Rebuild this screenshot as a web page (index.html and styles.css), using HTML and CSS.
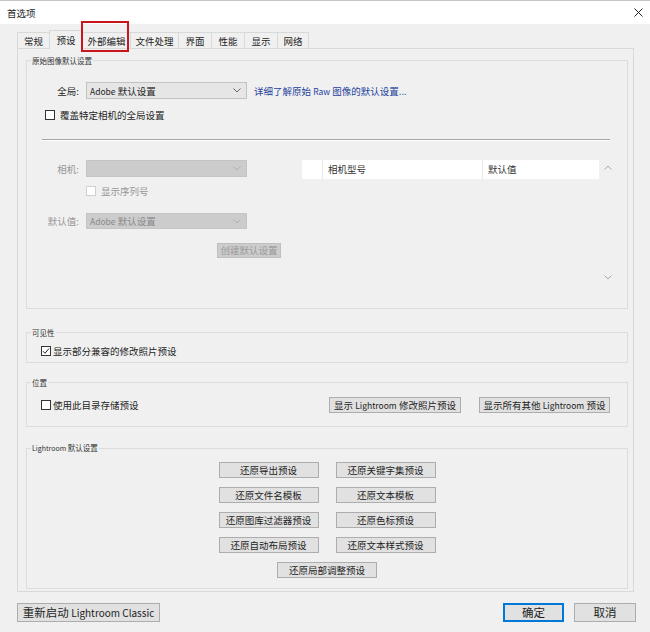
FILE: index.html
```html
<!DOCTYPE html>
<html lang="zh-CN">
<head>
    <meta charset="UTF-8">
    <title>首选项</title>
    <link rel="stylesheet" href="styles.css">
</head>
<body>
    <div class="titlebar">
        <span class="title">首选项</span>
        <svg class="close" width="9" height="9" viewBox="0 0 9 9"><path d="M0.5 0.5L8.5 8.5M8.5 0.5L0.5 8.5" stroke="#222" stroke-width="1"/></svg>
    </div>

    <div class="main">
        <div class="tabs">
            <div class="tab tab-2 first">常规</div>
            <div class="tab tab-2 active">预设</div>
            <div class="tab tab-4 marked">外部编辑</div>
            <div class="tab tab-4">文件处理</div>
            <div class="tab tab-2">界面</div>
            <div class="tab tab-2">性能</div>
            <div class="tab tab-2">显示</div>
            <div class="tab tab-2 last">网络</div>
        </div>

        <div class="page">
            <!-- 原始图像默认设置 -->
            <fieldset class="group group-raw">
                <legend>原始图像默认设置</legend>
                <div class="row row-global">
                    <span class="label">全局:</span>
                    <div class="select">
                        <span><span class="en">Adobe</span> 默认设置</span>
                        <svg class="chev" width="8" height="5" viewBox="0 0 8 5"><path d="M0.5 0.5L4 4L7.5 0.5" fill="none" stroke="#666" stroke-width="1"/></svg>
                    </div>
                    <span class="link">详细了解原始 <span class="en">Raw</span> 图像的默认设置...</span>
                </div>
                <div class="check row-override"><span class="box"></span>覆盖特定相机的全局设置</div>
                <div class="separator"></div>

                <div class="camera-area">
                    <div class="camera-form">
                        <div class="row row-camera">
                            <span class="label disabled-text">相机:</span>
                            <div class="select disabled">
                                <span></span>
                                <svg class="chev" width="8" height="5" viewBox="0 0 8 5"><path d="M0.5 0.5L4 4L7.5 0.5" fill="none" stroke="#b0b0b0" stroke-width="1"/></svg>
                            </div>
                        </div>
                        <div class="check disabled-text row-serial"><span class="box box-disabled"></span>显示序列号</div>
                        <div class="row row-default">
                            <span class="label disabled-text">默认值:</span>
                            <div class="select disabled">
                                <span><span class="en">Adobe</span> 默认设置</span>
                                <svg class="chev" width="8" height="5" viewBox="0 0 8 5"><path d="M0.5 0.5L4 4L7.5 0.5" fill="none" stroke="#b0b0b0" stroke-width="1"/></svg>
                            </div>
                        </div>
                        <div class="button button-disabled create">创建默认设置</div>
                    </div>

                    <div class="table">
                        <div class="table-main">
                            <div class="thead">
                                <div class="th th-first"></div>
                                <div class="th th-model">相机型号</div>
                                <div class="th th-value">默认值</div>
                            </div>
                        </div>
                        <div class="scrollbar">
                            <svg width="8" height="5" viewBox="0 0 8 5"><path d="M0.5 4.5L4 1L7.5 4.5" fill="none" stroke="#a8a8a8" stroke-width="1"/></svg>
                            <svg width="8" height="5" viewBox="0 0 8 5"><path d="M0.5 0.5L4 4L7.5 0.5" fill="none" stroke="#a8a8a8" stroke-width="1"/></svg>
                        </div>
                    </div>
                </div>
            </fieldset>

            <!-- 可见性 -->
            <fieldset class="group group-visibility">
                <legend>可见性</legend>
                <div class="check row-partial">
                    <span class="box">
                        <svg width="8" height="8" viewBox="0 0 8 8"><path d="M1 4.2L3 6.3L7 1.5" fill="none" stroke="#222" stroke-width="1"/></svg>
                    </span>显示部分兼容的修改照片预设
                </div>
            </fieldset>

            <!-- 位置 -->
            <fieldset class="group group-location">
                <legend>位置</legend>
                <div class="row row-location">
                    <div class="check"><span class="box"></span>使用此目录存储预设</div>
                    <div class="button show-develop">显示 <span class="en">Lightroom</span> 修改照片预设</div>
                    <div class="button show-other">显示所有其他 <span class="en">Lightroom</span> 预设</div>
                </div>
            </fieldset>

            <!-- Lightroom 默认设置 -->
            <fieldset class="group group-defaults">
                <legend><span class="en">Lightroom</span> 默认设置</legend>
                <div class="restore-grid">
                    <div class="button">还原导出预设</div>
                    <div class="button">还原关键字集预设</div>
                    <div class="button">还原文件名模板</div>
                    <div class="button">还原文本模板</div>
                    <div class="button">还原图库过滤器预设</div>
                    <div class="button">还原色标预设</div>
                    <div class="button">还原自动布局预设</div>
                    <div class="button">还原文本样式预设</div>
                    <div class="button wide-center">还原局部调整预设</div>
                </div>
            </fieldset>
        </div>

        <div class="footer">
            <div class="button footer-button restart">重新启动 <span class="en">Lightroom Classic</span></div>
            <div class="button footer-button ok">确定</div>
            <div class="button footer-button cancel">取消</div>
        </div>
    </div>
</body>
</html>
```

FILE: styles.css
```css
body {
    margin: 0;
    width: 650px;
    height: 632px;
    overflow: hidden;
    background-color: #f0f0f0;
    font-family: "Noto Sans CJK SC", "Noto Sans", sans-serif;
    font-size: 9.5px;
    color: #1e1e1e;
}

/* Latin text is drawn a little smaller than the CJK glyphs */
.en {
    font-size: 8.5px;
}

/* barra del titolo */
.titlebar {
    box-sizing: border-box;
    height: 24px;
    background-color: #fff;
    border-top: 1px solid #c6c6c6;
    display: flex;
    align-items: center;
    justify-content: space-between;
    padding: 0 7px 0 7px;
}
.title {
    line-height: 12px;
}

.main {
    padding: 8px 0 0 17px;
}

/* schede */
.tabs {
    display: flex;
    height: 16px;
    position: relative;
    z-index: 1;
}
.tab {
    position: relative;
    box-sizing: border-box;
    height: 16px;
    border: 1px solid #d9d9d9;
    border-bottom: none;
    margin-right: -1px;
    text-align: center;
    line-height: 16px;
    background-color: #f0f0f0;
}
.tab-2 {
    width: 34px;
}
.tab-4 {
    width: 49px;
}
.tab.first {
    width: 33px;
}
.tab.last {
    width: 32px;
}
.tab.active {
    height: 19px;
    margin-top: -2px;
    line-height: 19px;
    background-color: #f0f0f0;
}
.tab.marked::after {
    content: "";
    position: absolute;
    left: -2px;
    right: 1px;
    top: -12px;
    bottom: -4px;
    border: 2px solid #c8161e;
}

/* pagina */
.page {
    box-sizing: border-box;
    width: 617px;
    height: 544px;
    border: 1px solid #d9d9d9;
    padding: 7px 0 0 8px;
    background-color: #f0f0f0;
}

.group {
    box-sizing: border-box;
    width: 602px;
    margin: 0;
    padding: 0;
    min-width: 0;
    border: 1px solid #dcdcdc;
}
.group legend {
    font-size: 7.5px;
    line-height: 9px;
    padding: 0 1px;
    margin-left: 4px;
    color: #333;
}
.group legend .en {
    font-size: 7px;
}
.group-raw {
    height: 253px;
}
.group-visibility {
    height: 35px;
    margin-top: 19px;
}
.group-location {
    height: 49px;
    margin-top: 15px;
}
.group-defaults {
    height: 146px;
    margin-top: 16px;
}

.row {
    display: flex;
    align-items: center;
}
.label {
    box-sizing: border-box;
    width: 59px;
    padding-right: 7px;
    text-align: right;
    line-height: 12px;
}
.disabled-text {
    color: #969696;
}

.select {
    box-sizing: border-box;
    width: 161px;
    height: 17px;
    border: 1px solid #c2c2c2;
    background-color: #e6e6e6;
    display: flex;
    align-items: center;
    justify-content: space-between;
    padding: 0 5px 0 3px;
    line-height: 12px;
}
.select.disabled {
    background-color: #cccccc;
    border-color: #c4c4c4;
    color: #8a8a8a;
}
.link {
    margin-left: 7px;
    color: #1d3f9c;
    line-height: 12px;
}

.check {
    display: flex;
    align-items: center;
    height: 12px;
    line-height: 12px;
}
.box {
    box-sizing: border-box;
    width: 10px;
    height: 10px;
    border: 1px solid #333;
    background-color: #fff;
    margin-right: 5px;
    display: flex;
    align-items: center;
    justify-content: center;
}
.box-disabled {
    border-color: #d0d0d0;
}

.row-global {
    height: 17px;
    margin-top: 17px;
}
.row-override {
    margin: 10px 0 0 18px;
}
.separator {
    width: 568px;
    margin: 18px 0 0 15px;
    border-top: 1px solid #a6a6a6;
    border-bottom: 1px solid #fff;
}

.camera-area {
    display: flex;
    margin-top: 19px;
}
.camera-form {
    width: 255px;
}
.row-camera {
    height: 17px;
}
.row-serial {
    margin: 8px 0 0 59px;
}
.row-default {
    height: 16px;
    margin-top: 16px;
}
.row-default .select {
    height: 16px;
}

.button {
    box-sizing: border-box;
    height: 16px;
    border: 1px solid #adadad;
    background-color: #e1e1e1;
    text-align: center;
    line-height: 14px;
    white-space: nowrap;
}
.button-disabled {
    background-color: #cccccc;
    border-color: #bfbfbf;
    color: #9a9a9a;
}
.create {
    width: 64px;
    height: 15px;
    line-height: 13px;
    margin: 14px 0 0 190px;
}

/* tabella delle fotocamere */
.table {
    display: flex;
    margin-left: 20px;
    height: 128px;
}
.table-main {
    width: 297px;
}
.thead {
    display: flex;
    height: 19px;
}
.th {
    box-sizing: border-box;
    height: 19px;
    background-color: #fff;
    line-height: 19px;
    padding-left: 5px;
    color: #333;
}
.th-first {
    width: 21px;
    border-right: 1px solid #e6e6e6;
}
.th-model {
    width: 160px;
    border-right: 1px solid #e6e6e6;
}
.th-value {
    width: 116px;
}
.scrollbar {
    box-sizing: border-box;
    width: 18px;
    display: flex;
    flex-direction: column;
    justify-content: space-between;
    align-items: center;
    padding: 5px 0 8px;
}

.row-partial {
    margin: 8px 0 0 14px;
}
.row-partial .box,
.row-location .box {
    margin-right: 2px;
}

.row-location {
    height: 16px;
    margin-top: 10px;
    padding-left: 14px;
}
.show-develop {
    width: 132px;
    margin-left: auto;
}
.show-other {
    width: 131px;
    margin: 0 17px 0 18px;
}

.restore-grid {
    display: grid;
    grid-template-columns: 100px 100px;
    column-gap: 17px;
    row-gap: 9px;
    justify-content: center;
    margin-top: 9px;
}
.wide-center {
    grid-column: 1 / -1;
    justify-self: center;
    width: 100px;
}

/* pulsanti in fondo */
.footer {
    display: flex;
    align-items: center;
    width: 619px;
    margin-top: 11px;
}
.footer-button {
    height: 19px;
    line-height: 17px;
    font-size: 11.5px;
}
.footer-button .en {
    font-size: 10px;
}
.restart {
    width: 143px;
}
.ok {
    width: 61px;
    margin-left: auto;
    border-color: #0078d7;
    box-shadow: inset 0 0 0 1px #0078d7;
}
.cancel {
    width: 62px;
    margin-left: 10px;
}
```
